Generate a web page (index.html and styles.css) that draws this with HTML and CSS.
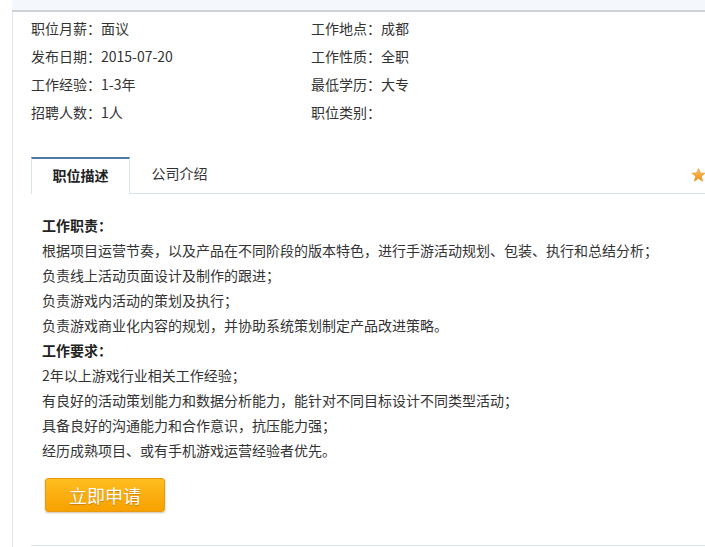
FILE: index.html
```html
<!DOCTYPE html>
<html lang="zh-CN">
<head>
    <meta charset="UTF-8">
    <title>职位详情</title>
    <link rel="stylesheet" href="styles.css">
</head>
<body>
    <div class="top-bar"></div>

    <div class="job-main">
        <div class="job-info">
            <div>职位月薪：面议</div>
            <div>工作地点：成都</div>
            <div>发布日期：2015-07-20</div>
            <div>工作性质：全职</div>
            <div>工作经验：1-3年</div>
            <div>最低学历：大专</div>
            <div>招聘人数：1人</div>
            <div>职位类别：</div>
        </div>

        <div class="tabs">
            <div class="tab active">职位描述</div>
            <div class="tab">公司介绍</div>
            <svg class="fav-star" width="15" height="14" viewBox="0 0 15 14">
                <defs>
                    <linearGradient id="starFill" x1="0" y1="0" x2="0" y2="1">
                        <stop offset="0" stop-color="#fcc25a"/>
                        <stop offset="1" stop-color="#ef8f1c"/>
                    </linearGradient>
                </defs>
                <path d="M7.5 0.6 L9.3 4.9 L14.2 5.2 L10.4 8.3 L11.6 13.2 L7.5 10.5 L3.4 13.2 L4.6 8.3 L0.8 5.2 L5.7 4.9 Z" fill="url(#starFill)" stroke="#e3922c" stroke-width="0.6"/>
            </svg>
        </div>

        <div class="job-desc">
            <div class="desc-title">工作职责：</div>
            <div>根据项目运营节奏，以及产品在不同阶段的版本特色，进行手游活动规划、包装、执行和总结分析；</div>
            <div>负责线上活动页面设计及制作的跟进；</div>
            <div>负责游戏内活动的策划及执行；</div>
            <div>负责游戏商业化内容的规划，并协助系统策划制定产品改进策略。</div>
            <div class="desc-title">工作要求：</div>
            <div>2年以上游戏行业相关工作经验；</div>
            <div>有良好的活动策划能力和数据分析能力，能针对不同目标设计不同类型活动；</div>
            <div>具备良好的沟通能力和合作意识，抗压能力强；</div>
            <div>经历成熟项目、或有手机游戏运营经验者优先。</div>

            <a class="apply-btn" href="#">立即申请</a>
        </div>

        <div class="job-footer"></div>
    </div>
</body>
</html>
```

FILE: styles.css
```css
body {
    margin: 0;
    font-family: "Noto Sans CJK SC", "Liberation Sans", sans-serif;
    font-size: 14px;
    color: #333;
    background: #fff;
    overflow: hidden;
}

.top-bar {
    margin-left: 12px;
    height: 10px;
    background: #f4f8fd;
    border-bottom: 2px solid #cdd1d8;
}

.job-main {
    margin-left: 12px;
    border-left: 1px solid #dfe6ee;
    padding: 2px 0 0 18px;
}

.job-info {
    display: grid;
    grid-template-columns: 280px 1fr;
    line-height: 28px;
}

.tabs {
    position: relative;
    display: flex;
    margin-top: 31px;
    height: 36px;
    border-bottom: 1px solid #d8e3ed;
}

.tab {
    width: 99px;
    text-align: center;
    line-height: 28px;
    padding-top: 2px;
}

.tab.active {
    box-sizing: border-box;
    height: 37px;
    margin-bottom: -1px;
    padding-top: 0;
    line-height: 33px;
    font-weight: bold;
    color: #222;
    background: #fff;
    border-top: 2px solid #4f78a7;
    border-left: 1px solid #d8e3ed;
    border-right: 1px solid #d8e3ed;
}

.fav-star {
    position: absolute;
    right: -1px;
    top: 11px;
}

.job-desc {
    padding: 19px 0 0 11px;
    line-height: 25px;
}

.desc-title {
    font-weight: bold;
    color: #222;
}

.apply-btn {
    display: block;
    width: 118px;
    height: 32px;
    margin: 15px 0 0 3px;
    line-height: 32px;
    text-align: center;
    font-size: 18px;
    color: #fff;
    text-decoration: none;
    text-shadow: 0 1px 1px rgba(160, 90, 0, 0.5);
    background: linear-gradient(#ffbd20, #f7a100);
    border: 1px solid #e89a10;
    border-radius: 3px;
    box-shadow: 0 1px 2px rgba(120, 70, 0, 0.35);
}

.job-footer {
    margin-top: 33px;
    border-top: 1px solid #dbe6f2;
    height: 10px;
}
```
